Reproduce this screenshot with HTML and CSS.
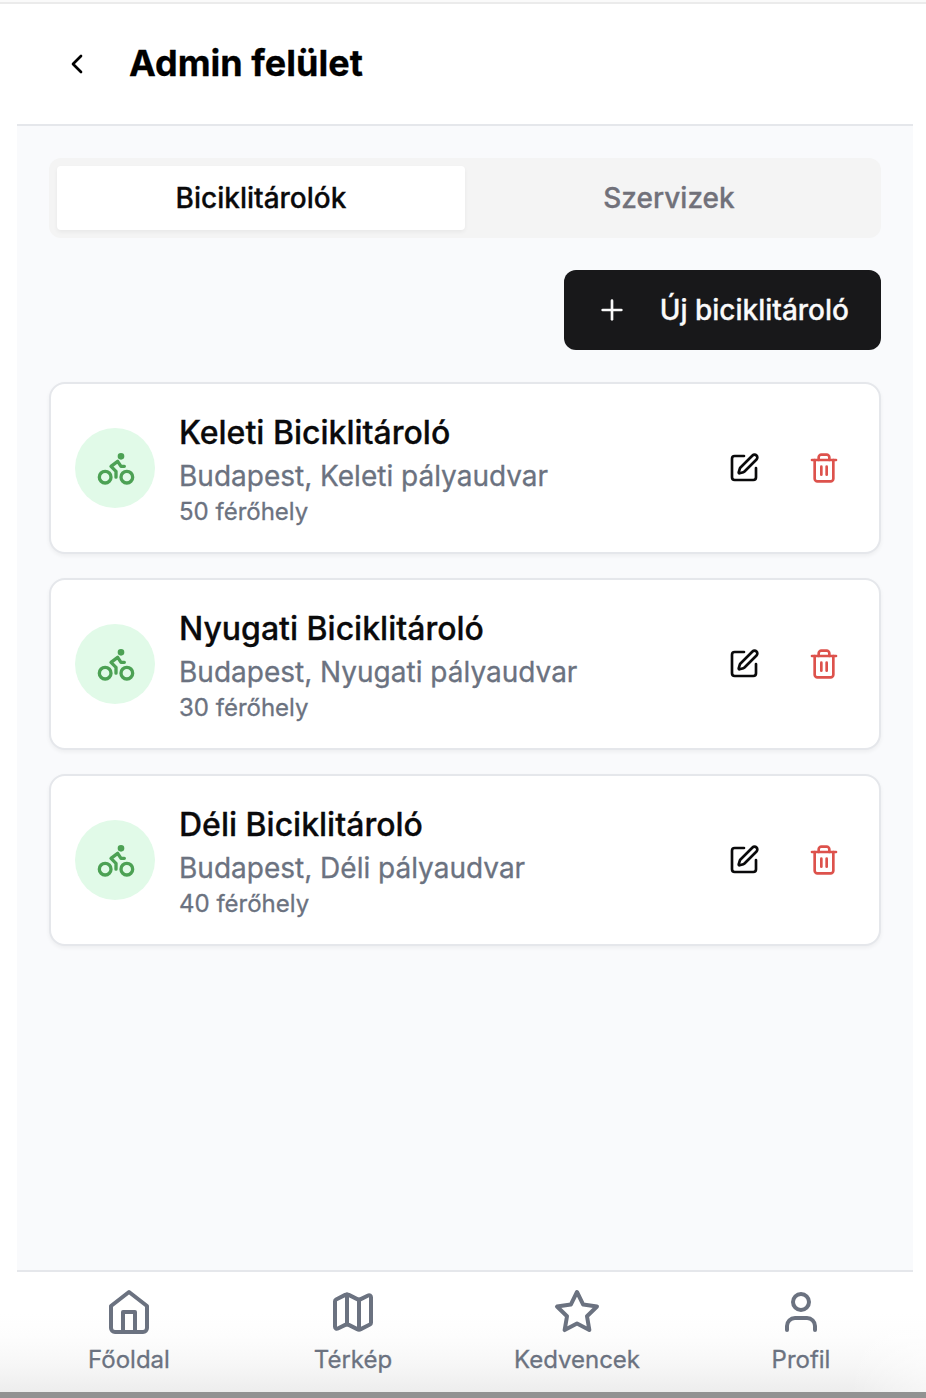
FILE: index.html
```html
<!DOCTYPE html>
<html lang="hu">
<head>
<meta charset="utf-8">
<title>Admin felület</title>
<link rel="stylesheet" href="styles.css">
</head>
<body>
<svg class="sprite" aria-hidden="true">
  <symbol id="bike" viewBox="0 0 24 24"><circle cx="18.5" cy="17.5" r="3.5"/><circle cx="5.5" cy="17.5" r="3.5"/><circle cx="15" cy="5" r="1"/><path d="M12 17.5V14l-3-3 4-3 2 3h2"/></symbol>
  <symbol id="edit" viewBox="0 0 24 24"><path d="M12 3H5a2 2 0 0 0-2 2v14a2 2 0 0 0 2 2h14a2 2 0 0 0 2-2v-7"/><path d="M18.375 2.625a1 1 0 0 1 3 3l-9.013 9.014a2 2 0 0 1-.853.505l-2.873.84a.5.5 0 0 1-.62-.62l.84-2.873a2 2 0 0 1 .506-.852z"/></symbol>
  <symbol id="trash" viewBox="0 0 24 24"><path d="M3 6h18"/><path d="M19 6v14c0 1-1 2-2 2H7c-1 0-2-1-2-2V6"/><path d="M8 6V4c0-1 1-2 2-2h4c1 0 2 1 2 2v2"/><path d="M10 11v6"/><path d="M14 11v6"/></symbol>
</svg>
<div class="app">
  <header class="header">
    <button class="back" aria-label="Vissza"><svg class="icon" viewBox="0 0 24 24"><path d="m15 18-6-6 6-6"/></svg></button>
    <h1 class="title">Admin felület</h1>
  </header>
  <main class="main">
    <div class="tabs">
      <button class="tab tab-active">Biciklitárolók</button>
      <button class="tab">Szervizek</button>
    </div>
    <button class="add"><svg class="icon" viewBox="0 0 24 24"><path d="M5 12h14"/><path d="M12 5v14"/></svg><span>Új biciklitároló</span></button>
    <ul class="list">
      <li class="card">
        <div class="avatar"><svg class="icon bike"><use href="#bike"/></svg></div>
        <div class="info"><h2 class="name">Keleti Biciklitároló</h2><p class="place">Budapest, Keleti pályaudvar</p><p class="capacity">50 férőhely</p></div>
        <button class="action"><svg class="icon"><use href="#edit"/></svg></button>
        <button class="action danger"><svg class="icon"><use href="#trash"/></svg></button>
      </li>
      <li class="card">
        <div class="avatar"><svg class="icon bike"><use href="#bike"/></svg></div>
        <div class="info"><h2 class="name">Nyugati Biciklitároló</h2><p class="place">Budapest, Nyugati pályaudvar</p><p class="capacity">30 férőhely</p></div>
        <button class="action"><svg class="icon"><use href="#edit"/></svg></button>
        <button class="action danger"><svg class="icon"><use href="#trash"/></svg></button>
      </li>
      <li class="card">
        <div class="avatar"><svg class="icon bike"><use href="#bike"/></svg></div>
        <div class="info"><h2 class="name">Déli Biciklitároló</h2><p class="place">Budapest, Déli pályaudvar</p><p class="capacity">40 férőhely</p></div>
        <button class="action"><svg class="icon"><use href="#edit"/></svg></button>
        <button class="action danger"><svg class="icon"><use href="#trash"/></svg></button>
      </li>
    </ul>
  </main>
</div>
<footer class="footer">
  <nav class="nav">
    <a class="nav-item"><svg class="icon nav-icon" viewBox="0 0 24 24"><path d="m3 9 9-7 9 7v11a2 2 0 0 1-2 2H5a2 2 0 0 1-2-2z"/><path d="M9 22V12h6v10"/></svg><span>Főoldal</span></a>
    <a class="nav-item"><svg class="icon nav-icon" viewBox="0 0 24 24"><path d="M14.106 5.553a2 2 0 0 0 1.788 0l3.659-1.83A1 1 0 0 1 21 4.619v12.764a1 1 0 0 1-.553.894l-4.553 2.277a2 2 0 0 1-1.788 0l-4.212-2.106a2 2 0 0 0-1.788 0l-3.659 1.83A1 1 0 0 1 3 19.381V6.618a1 1 0 0 1 .553-.894l4.553-2.277a2 2 0 0 1 1.788 0z"/><path d="M15 5.764v15"/><path d="M9 3.236v15"/></svg><span>Térkép</span></a>
    <a class="nav-item"><svg class="icon nav-icon" viewBox="0 0 24 24"><path d="M12 2l3.09 6.26L22 9.27l-5 4.87 1.18 6.88L12 17.77l-6.18 3.25L7 14.14 2 9.27l6.91-1.01z"/></svg><span>Kedvencek</span></a>
    <a class="nav-item"><svg class="icon nav-icon" viewBox="0 0 24 24"><path d="M19 21v-2a4 4 0 0 0-4-4H9a4 4 0 0 0-4 4v2"/><circle cx="12" cy="7" r="4"/></svg><span>Profil</span></a>
  </nav>
</footer>
</body>
</html>
```
FILE: styles.css
```css
* { box-sizing: border-box; margin: 0; padding: 0; }
body {
  height: 1398px;
  display: flex;
  flex-direction: column;
  overflow: hidden;
  background: #fff;
  border-top: 2px solid #fafafa;
  color: #0a0a0b;
  font-family: Inter, "Liberation Sans", sans-serif;
  -webkit-font-smoothing: antialiased;
  -webkit-text-stroke: .3px currentColor;
}
body::before { content: ""; height: 2px; flex: none; background: #ebebeb; }
button { border: 0; background: none; font: inherit; color: inherit; }
.sprite { display: none; }
.icon {
  width: 32px;
  height: 32px;
  flex: none;
  fill: none;
  stroke: currentColor;
  stroke-width: 2;
  stroke-linecap: round;
  stroke-linejoin: round;
}
.app { flex: 1; width: 896px; margin-left: 17px; display: flex; flex-direction: column; }
.header {
  height: 122px;
  display: flex;
  align-items: center;
  gap: 8px;
  padding: 0 20px;
  border-bottom: 2px solid #e5e7eb;
  color: #000;
}
.back { width: 80px; height: 80px; display: grid; place-items: center; }
.title { margin-left: 4px; padding-bottom: 2px; font-size: 36px; line-height: 56px; font-weight: 700; }
.main {
  flex: 1;
  display: flex;
  flex-direction: column;
  gap: 32px;
  padding: 32px;
  background: #f9fafc;
}
.tabs {
  height: 80px;
  display: grid;
  grid-template-columns: 1fr 1fr;
  padding: 8px;
  border-radius: 12px;
  background: #f4f4f4;
}
.tab { border-radius: 4px; font-size: 28px; font-weight: 500; line-height: 40px; color: #71717a; }
.tab-active { background: #fff; color: #0a0a0b; box-shadow: 0 2px 4px rgba(0, 0, 0, .05); }
.add {
  align-self: flex-end;
  height: 80px;
  display: flex;
  align-items: center;
  gap: 32px;
  padding: 0 32px;
  border-radius: 12px;
  background: #18181a;
  color: #fafafa;
  font-size: 28px;
  font-weight: 500;
}
.list { display: flex; flex-direction: column; gap: 24px; list-style: none; }
.card {
  height: 172px;
  display: flex;
  align-items: center;
  padding: 24px;
  border: 2px solid #e5e7eb;
  border-radius: 16px;
  background: #fff;
  box-shadow: 0 2px 4px rgba(0, 0, 0, .05);
}
.avatar {
  width: 80px;
  height: 80px;
  display: flex;
  align-items: center;
  padding-left: 21px;
  border-radius: 50%;
  background: #e1fae8;
  color: #4ca154;
}
.bike { width: 40px; height: 40px; }
.info { flex: 1; padding-left: 24px; color: #6b7280; }
.name { padding-top: 2px; font-size: 32px; line-height: 46px; font-weight: 500; color: #0a0a0b; }
.place { font-size: 28px; line-height: 40px; }
.capacity { font-size: 24px; line-height: 32px; }
.action { width: 80px; height: 80px; display: grid; place-items: center; }
.action + .action { margin-right: -9px; }
.danger { color: #dd524c; }
.footer {
  height: 128px;
  flex: none;
  border-bottom: 6px solid #929292;
  background:
    linear-gradient(to right, rgba(255, 255, 255, 0) 850px, rgba(255, 255, 255, .5) 926px),
    linear-gradient(#fff 0, #fff 44px, #fdfdfd 66px, #f7f7f7 94px, #ededed 122px);
}
.nav {
  width: 896px;
  margin-left: 17px;
  display: grid;
  grid-template-columns: repeat(4, 1fr);
  border-top: 2px solid #e5e7eb;
}
.nav-item {
  display: flex;
  flex-direction: column;
  align-items: center;
  gap: 8px;
  padding-top: 16px;
  color: #6b7280;
  font-size: 24px;
  line-height: 32px;
}
.nav-icon { width: 48px; height: 48px; }
```
